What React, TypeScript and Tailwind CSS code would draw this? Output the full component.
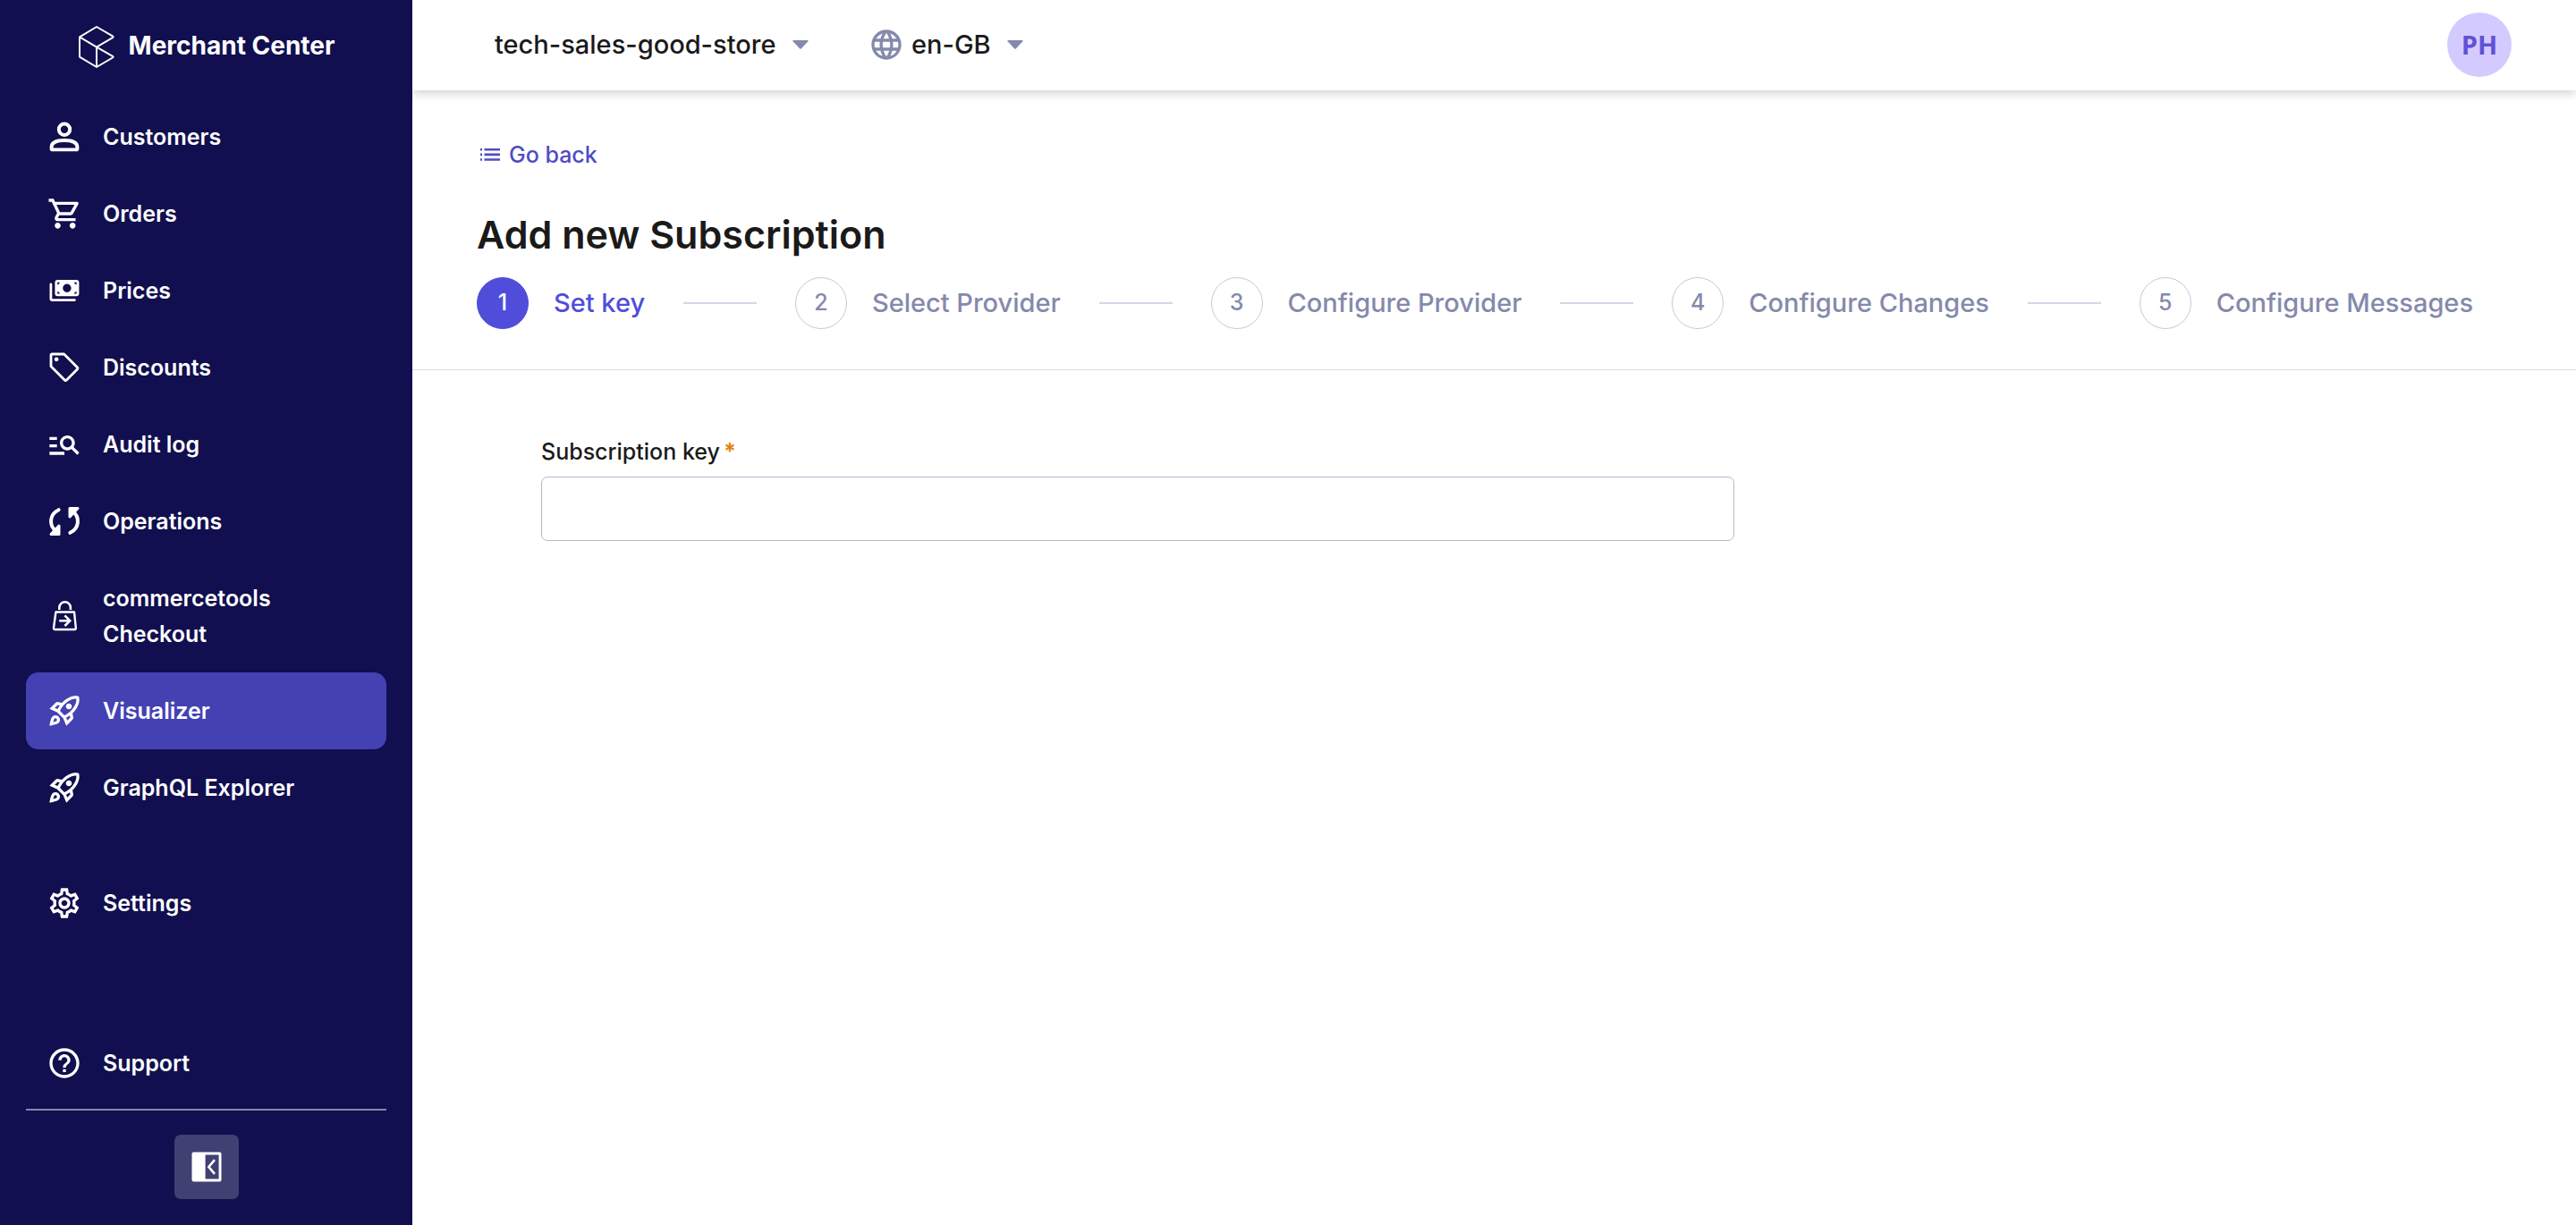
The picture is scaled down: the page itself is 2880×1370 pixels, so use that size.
import { Fragment, type ReactNode } from "react";
import {
  MdHelpOutline,
  MdLanguage,
  MdManageSearch,
  MdOutlineRocketLaunch,
  MdOutlineSettings,
} from "react-icons/md";

function Glyph({ children }: { children: ReactNode }) {
  return (
    <svg viewBox="0 0 40 40" className="size-10" fill="none" stroke="currentColor" strokeWidth="2.8" aria-hidden="true">
      {children}
    </svg>
  );
}

const CustomersIcon = () => (
  <Glyph>
    <circle cx="20" cy="11.8" r="6.2" strokeWidth="4" />
    <path
      d="M5.6 31.6 C5.6 25 13 24 20 24 C27 24 34.4 25 34.4 31.6 V33.2 Q34.4 34.4 33.2 34.4 H6.8 Q5.6 34.4 5.6 33.2 Z"
      strokeWidth="3.9"
      strokeLinejoin="round"
    />
  </Glyph>
);

const OrdersIcon = () => (
  <svg viewBox="-0.5 0 24 24" className="size-10" fill="currentColor" aria-hidden="true">
    <path d="M15.55 13c.75 0 1.41-.41 1.75-1.03l3.58-6.49c.37-.66-.11-1.48-.87-1.48H5.21l-.94-2H1v2h2l3.6 7.59-1.35 2.44C4.52 15.37 5.48 17 7 17h12v-2H7l1.1-2h7.45zM6.16 6h12.15l-2.76 5H8.53L6.16 6zM7 18c-1.1 0-1.99.9-1.99 2S5.9 22 7 22s2-.9 2-2-.9-2-2-2zm10 0c-1.1 0-1.99.9-1.99 2s.89 2 1.99 2 2-.9 2-2-.9-2-2-2z" />
  </svg>
);

const PricesIcon = () => (
  <Glyph>
    <path
      fill="currentColor"
      stroke="none"
      fillRule="evenodd"
      d="M12.4 8H33.4Q36.4 8 36.4 11V23.3Q36.4 26.3 33.4 26.3H12.4Q9.4 26.3 9.4 23.3V11Q9.4 8 12.4 8Z M22.9 12.6A4.7 4.7 0 1 0 22.9 22A4.7 4.7 0 1 0 22.9 12.6Z M12.2 10.8V13.4Q14.4 13 15 10.8Z M33.6 10.8V13.4Q31.4 13 30.8 10.8Z M12.2 23.6V21Q14.4 21.4 15 23.6Z M33.6 23.6V21Q31.4 21.4 30.8 23.6Z"
    />
    <path d="M4.9 13V29Q4.9 30.6 6.5 30.6H31.4" strokeLinecap="round" />
  </Glyph>
);

const DiscountsIcon = () => (
  <Glyph>
    <path d="M5 6.2Q5 5 6.2 5H19.6L34.6 20Q35.4 20.9 34.6 21.7L22.2 34.2Q21.3 35 20.5 34.2L5 18.8Z" strokeLinejoin="round" />
    <circle cx="11.1" cy="10.8" r="2.4" fill="currentColor" stroke="none" />
  </Glyph>
);

const OperationsIcon = () => (
  <Glyph>
    <path d="M13.6 7.2C3.4 12 2 24.6 11 31.4" strokeWidth="4" strokeLinecap="round" />
    <path d="M14 25V34.6H5Z" fill="currentColor" strokeWidth="3" strokeLinejoin="round" />
    <path d="M26.4 32.8C36.6 28 38 15.4 29 8.6" strokeWidth="4" strokeLinecap="round" />
    <path d="M26 15V5.4H35Z" fill="currentColor" strokeWidth="3" strokeLinejoin="round" />
  </Glyph>
);

const CheckoutIcon = () => (
  <Glyph>
    <path d="M10.4 15.5 8 33Q7.8 35 9.6 35H31.2Q33 35 32.8 33L31 15.5Z" strokeWidth="2.4" strokeLinejoin="round" />
    <path d="M14.3 13V10.6A6.3 6.3 0 0 1 26.9 10.6V13" strokeWidth="2.6" />
    <path d="M14.2 25.2H26M20.4 19.4 26.2 25.2 20.4 31" strokeWidth="2.6" />
  </Glyph>
);

const RocketIcon = () => <MdOutlineRocketLaunch className="size-10" />;

const LogoIcon = () => (
  <svg viewBox="0 -2 42 50" className="h-[50px] w-[42px]" fill="none" stroke="currentColor" strokeWidth="2" strokeLinejoin="round" aria-hidden="true">
    <path d="M2 13.4 21 2 38.9 12.4Q40.2 13.3 38.9 14.2L21 24.7 2 13.4V35.6L21 47V24.7L38.9 34.8Q40.2 35.7 38.9 36.5L21 47" />
  </svg>
);

const CaretIcon = () => (
  <svg viewBox="0 0 18 10" className="pointer-events-none absolute right-0 h-2.5 w-[18px] text-[#8589ac]" fill="currentColor" aria-hidden="true">
    <path d="M0.6 1.2Q0 0 1.4 0H16.6Q18 0 17.4 1.2L9.7 9.5Q9 10.2 8.3 9.5Z" />
  </svg>
);

const ListIcon = () => (
  <svg viewBox="0 0 22 14" className="h-3.5 w-[22px]" fill="currentColor" aria-hidden="true">
    <path d="M0 0H2V2.6H0ZM4.5 0H22V2.6H4.5ZM0 5.6H2V8.2H0ZM4.5 5.6H22V8.2H4.5ZM0 11.2H2V13.8H0ZM4.5 11.2H22V13.8H4.5Z" />
  </svg>
);

const CollapseIcon = () => (
  <svg viewBox="0 0 34 34" className="size-[34px]" aria-hidden="true">
    <path
      fill="currentColor"
      fillRule="evenodd"
      d="M2.4 .5H31.6Q33.5 .5 33.5 2.4V31.6Q33.5 33.5 31.6 33.5H2.4Q.5 33.5 .5 31.6V2.4Q.5 .5 2.4 .5ZM15.6 3.4V30.6H30.6V3.4Z"
    />
    <path d="M26 9.2 19.4 17 26 24.8" fill="none" stroke="currentColor" strokeWidth="2.6" />
  </svg>
);

type Item = { label: string; icon: ReactNode; active?: boolean };

const items: Item[] = [
  { label: "Customers", icon: <CustomersIcon /> },
  { label: "Orders", icon: <OrdersIcon /> },
  { label: "Prices", icon: <PricesIcon /> },
  { label: "Discounts", icon: <DiscountsIcon /> },
  { label: "Audit log", icon: <MdManageSearch className="size-10" /> },
  { label: "Operations", icon: <OperationsIcon /> },
  { label: "commercetools Checkout", icon: <CheckoutIcon /> },
  { label: "Visualizer", icon: <RocketIcon />, active: true },
  { label: "GraphQL Explorer", icon: <RocketIcon /> },
];

function NavItem({ label, icon, active }: Item) {
  return (
    <a
      href="#"
      aria-current={active ? "page" : undefined}
      className={`flex items-center gap-[23px] rounded-[14px] py-[23px] pr-20 pl-[23px] text-[25px] leading-10 font-semibold text-white ${active ? "bg-[#4441b3]" : ""}`}
    >
      <span className="shrink-0">{icon}</span>
      <span>{label}</span>
    </a>
  );
}

const steps = ["Set key", "Select Provider", "Configure Provider", "Configure Changes", "Configure Messages"];

function Picker({ label, value }: { label: string; value: string }) {
  return (
    <div className="relative flex items-center">
      <select aria-label={label} className="appearance-none bg-transparent pr-9 text-[29px] leading-10 font-medium text-[#1a1a1a]">
        <option>{value}</option>
      </select>
      <CaretIcon />
    </div>
  );
}

export default function App() {
  return (
    <div className="flex min-h-screen bg-white font-['Inter',sans-serif] text-[#1a1a1a]">
      <aside className="z-10 flex w-[461px] shrink-0 flex-col bg-[#110f4f] px-[29px] pb-[29px] text-white">
        <div className="flex h-[101px] items-center justify-center gap-[15px]">
          <LogoIcon />
          <span className="text-[28px] leading-10 font-bold">Merchant Center</span>
        </div>
        <nav className="mt-[9px] flex flex-1 flex-col">
          {items.map((item) => (
            <NavItem key={item.label} {...item} />
          ))}
          <div className="mt-[43px]">
            <NavItem label="Settings" icon={<MdOutlineSettings className="size-10" />} />
          </div>
          <div className="mt-auto pb-2">
            <NavItem label="Support" icon={<MdHelpOutline className="size-10" />} />
          </div>
        </nav>
        <div className="flex justify-center border-t-2 border-[#8885a9] pt-[27px]">
          <button type="button" aria-label="Collapse menu" className="flex size-[72px] items-center justify-center rounded-[7px] bg-[#414072]">
            <CollapseIcon />
          </button>
        </div>
      </aside>

      <div className="flex min-w-0 flex-1 flex-col">
        <header className="flex h-[101px] items-center pr-[72px] pb-px pl-[92px] shadow-[0_4px_10px_rgba(0,0,0,0.17)]">
          <Picker label="Project" value="tech-sales-good-store" />
          <div className="ml-[67px] flex items-center gap-2">
            <MdLanguage className="size-10 text-[#8589ac]" />
            <Picker label="Language" value="en-GB" />
          </div>
          <button type="button" aria-label="User menu" className="ml-auto flex size-[72px] items-center justify-center rounded-full bg-[#d3cbff] font-['Open_Sans',sans-serif] text-[29px] font-bold text-[#6150d8]">
            PH
          </button>
        </header>

        <main>
          <div className="border-b border-[#dedde9] px-[72px] pt-[52px] pb-[45px]">
            <a href="#" className="inline-flex items-center gap-2.5 pl-1 text-[25px] leading-10 font-medium text-[#4f4cc4]">
              <ListIcon />
              Go back
            </a>
            <h1 className="mt-10 text-[43px] leading-[58px] font-semibold">Add new Subscription</h1>
            <ol className="mt-[19px] flex items-center">
              {steps.map((step, i) => (
                <Fragment key={step}>
                  {i > 0 && <li aria-hidden="true" className="mr-[43px] h-0.5 flex-1 bg-[#d6d5e4]" />}
                  <li className="flex items-center" aria-current={i === 0 ? "step" : undefined}>
                    <span
                      className={`flex size-[58px] shrink-0 items-center justify-center rounded-full border text-[25px] font-medium ${i === 0 ? "border-[#504ddb] bg-[#504ddb] text-white" : "border-[#c8c6de] text-[#8589ac]"}`}
                    >
                      {i + 1}
                    </span>
                    <span className={`mr-[43px] ml-7 text-[29px] leading-10 font-medium whitespace-nowrap ${i === 0 ? "text-[#504ddb]" : "text-[#8589ac]"}`}>
                      {step}
                    </span>
                  </li>
                </Fragment>
              ))}
            </ol>
          </div>

          <form className="max-w-[1622px] px-36 pt-[71px]">
            <label htmlFor="subscription-key" className="flex gap-1 text-[25px] leading-10 font-medium">
              <span>Subscription key</span>
              <span className="font-bold text-[#e0860d]">*</span>
            </label>
            <input
              id="subscription-key"
              type="text"
              required
              className="mt-2 block h-[72px] w-full rounded-[7px] border border-[#b9b8cd] bg-white px-4 text-[25px] outline-none"
            />
          </form>
        </main>
      </div>
    </div>
  );
}
